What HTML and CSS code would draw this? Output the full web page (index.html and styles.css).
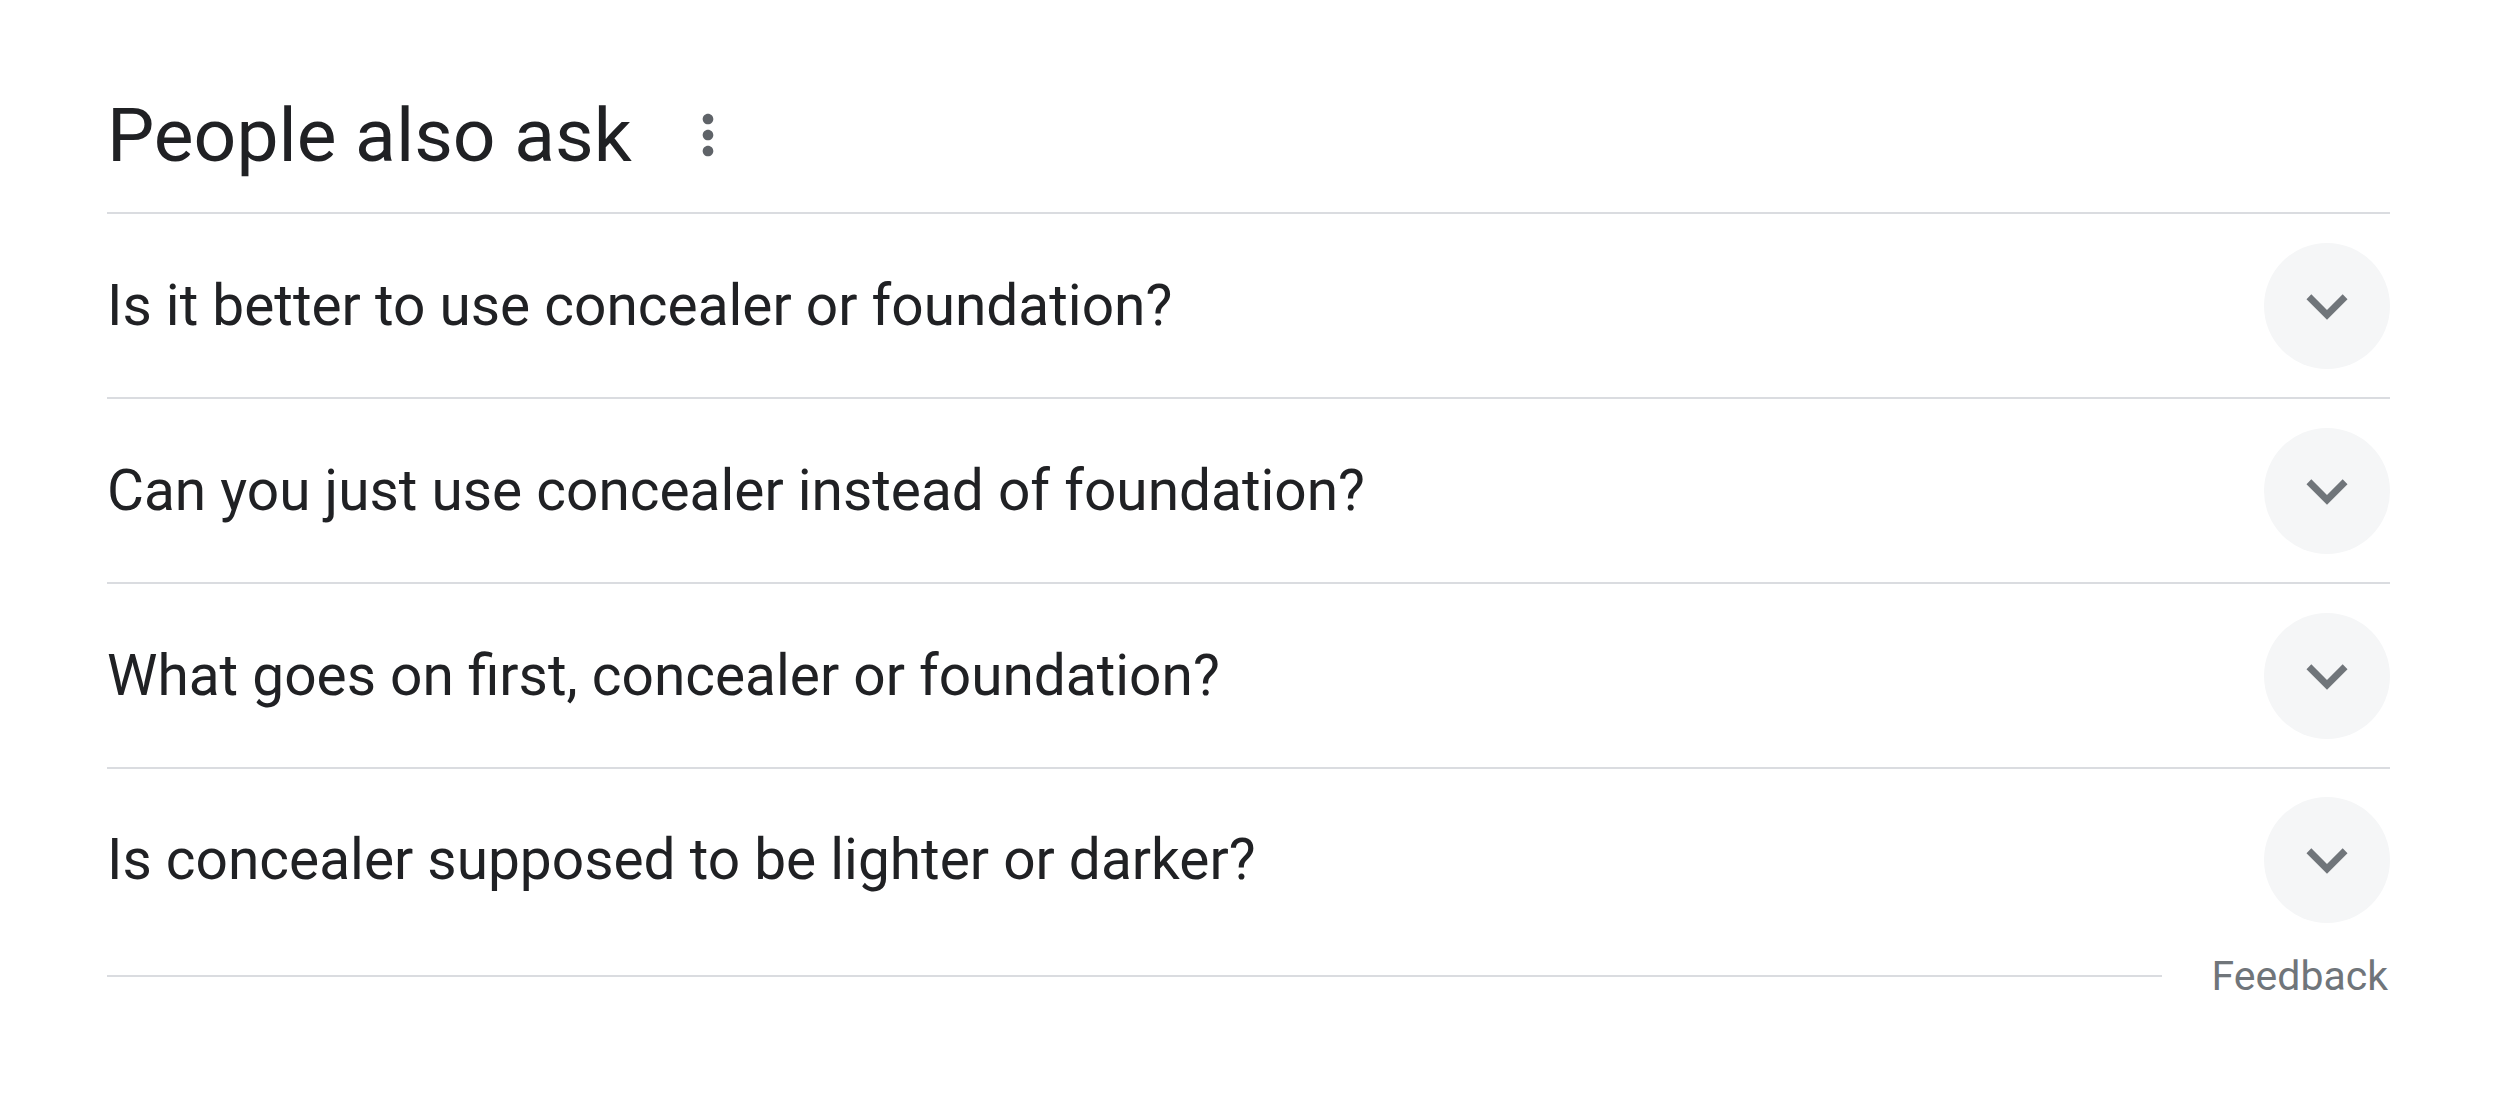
FILE: index.html
```html
<html>
	<head>
		<title>People also ask</title>
		<link rel="stylesheet" href="styles.css">
	</head>
	<body>
		<div class="paa">
			<div class="paa-header">
				<h2>People also ask</h2>
				<div class="more-icon">
					<svg viewBox="0 0 24 24" width="64" height="64"><path d="M12 8c1.1 0 2-.9 2-2s-.9-2-2-2-2 .9-2 2 .9 2 2 2zm0 2c-1.1 0-2 .9-2 2s.9 2 2 2 2-.9 2-2-.9-2-2-2zm0 6c-1.1 0-2 .9-2 2s.9 2 2 2 2-.9 2-2-.9-2-2-2z"/></svg>
				</div>
			</div>
			<div class="question">
				<span>Is it better to use concealer or foundation?</span>
				<div class="expand"><svg viewBox="0 0 24 24" width="82" height="82"><path d="M16.59 8.59L12 13.17 7.41 8.59 6 10l6 6 6-6z"/></svg></div>
			</div>
			<div class="question">
				<span>Can you just use concealer instead of foundation?</span>
				<div class="expand"><svg viewBox="0 0 24 24" width="82" height="82"><path d="M16.59 8.59L12 13.17 7.41 8.59 6 10l6 6 6-6z"/></svg></div>
			</div>
			<div class="question">
				<span>What goes on first, concealer or foundation?</span>
				<div class="expand"><svg viewBox="0 0 24 24" width="82" height="82"><path d="M16.59 8.59L12 13.17 7.41 8.59 6 10l6 6 6-6z"/></svg></div>
			</div>
			<div class="question last">
				<span>Is concealer supposed to be lighter or darker?</span>
				<div class="expand"><svg viewBox="0 0 24 24" width="82" height="82"><path d="M16.59 8.59L12 13.17 7.41 8.59 6 10l6 6 6-6z"/></svg></div>
			</div>
			<div class="feedback-row">
				<div class="feedback-line"></div>
				<a href="javascript:void(0);">Feedback</a>
			</div>
		</div>
	</body>
</html>
```

FILE: styles.css
```css
* {
	margin: 0;
	padding: 0;
	box-sizing: border-box;
}
body {
	background-color: #ffffff;
	font-family: Roboto, "Liberation Sans", Arial, sans-serif;
	color: #202124;
}
.paa {
	margin-left: 107px;
	width: 2283px;
}
.paa-header {
	display: flex;
	align-items: center;
	padding: 91px 0 33px;
	border-bottom: 2px solid #dadce0;
}
.paa-header h2 {
	font-size: 75px;
	font-weight: 400;
	line-height: 88px;
	color: #202124;
}
.more-icon {
	margin-left: 44px;
	height: 64px;
}
.more-icon svg {
	display: block;
	fill: #5f6368;
}
.question {
	display: flex;
	align-items: center;
	justify-content: space-between;
	height: 185px;
	border-bottom: 2px solid #dadce0;
}
.question.last {
	border-bottom: none;
	height: 181px;
}
.question span {
	font-size: 56.8px;
	line-height: 66px;
}
.expand {
	width: 126px;
	height: 126px;
	border-radius: 50%;
	background-color: #f5f6f7;
	display: flex;
	align-items: center;
	justify-content: center;
}
.expand svg {
	display: block;
	fill: #70757a;
}
.feedback-row {
	display: flex;
	align-items: center;
	height: 52px;
}
.feedback-line {
	flex: 1;
	height: 2px;
	background-color: #dadce0;
	margin-right: 50px;
}
.feedback-row a {
	font-size: 41px;
	line-height: 52px;
	color: #70757a;
	text-decoration: none;
	padding-right: 2px;
}
```
